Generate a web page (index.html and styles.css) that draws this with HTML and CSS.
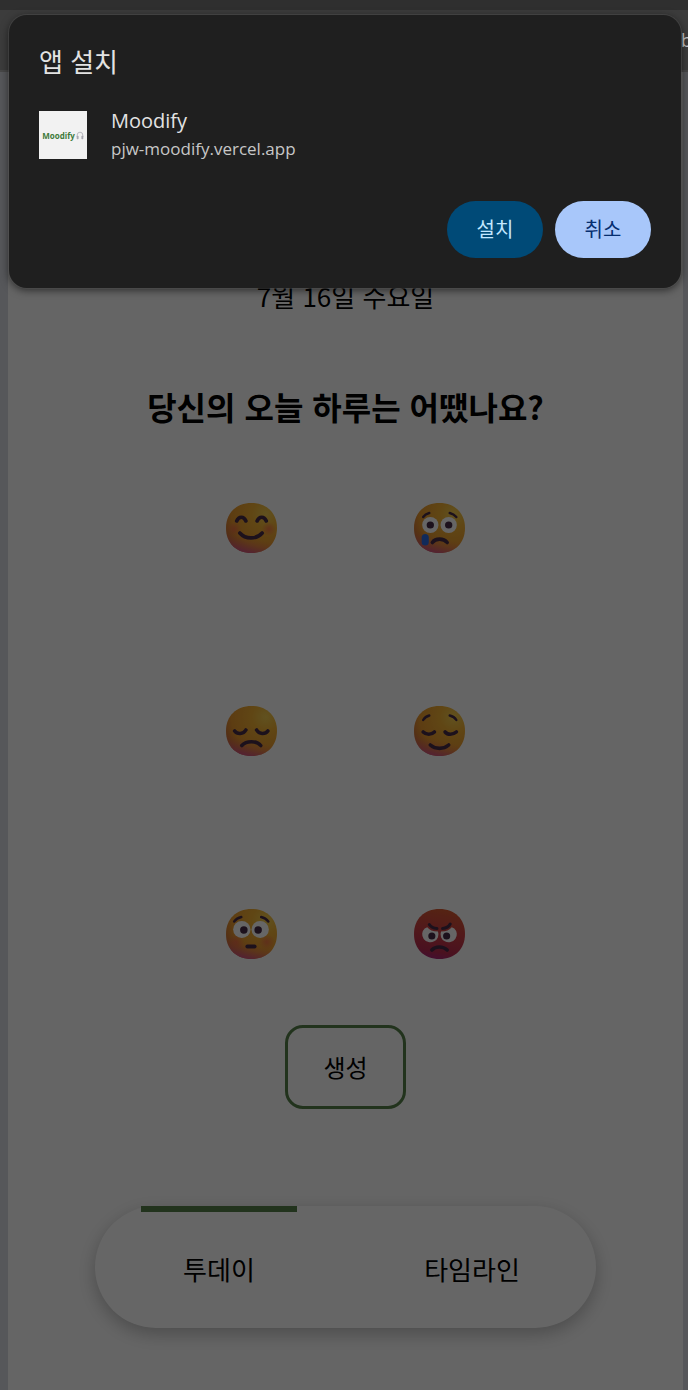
FILE: index.html
```html
<!DOCTYPE html>
<html lang="ko">
<head>
<meta charset="utf-8">
<meta name="viewport" content="width=device-width, initial-scale=1">
<title>Moodify</title>
<link rel="stylesheet" href="styles.css">
</head>
<body>
<svg class="defs" aria-hidden="true">
  <defs>
    <radialGradient id="face" cx="0.78" cy="0.22" r="0.9">
      <stop offset="0" stop-color="#f2cc50"/>
      <stop offset="0.3" stop-color="#f0b034"/>
      <stop offset="0.75" stop-color="#e8982e"/>
      <stop offset="1" stop-color="#c86a38"/>
    </radialGradient>
    <linearGradient id="chin" x1="0.4" y1="1" x2="0.48" y2="0.68">
      <stop offset="0" stop-color="#d0508c" stop-opacity="0.9"/>
      <stop offset="1" stop-color="#e87848" stop-opacity="0"/>
    </linearGradient>
    <linearGradient id="rage" x1="0.6" y1="0" x2="0.4" y2="1">
      <stop offset="0" stop-color="#d65a30"/>
      <stop offset="0.45" stop-color="#cc4044"/>
      <stop offset="0.85" stop-color="#b82c50"/>
      <stop offset="1" stop-color="#a82878"/>
    </linearGradient>
    <radialGradient id="blush">
      <stop offset="0" stop-color="#f0604c" stop-opacity="0.65"/>
      <stop offset="1" stop-color="#f0604c" stop-opacity="0"/>
    </radialGradient>
    <path id="head" d="M25 0C40 0 50 10 50 25S40 50 25 50 0 40 0 25 10 0 25 0Z"/>
  </defs>
</svg>

<header class="browser-bar"><span class="browser-text">b</span></header>

<div class="viewport">
  <main class="page">
    <p class="date">7월 16일 수요일</p>
    <h1 class="question">당신의 오늘 하루는 어땠나요?</h1>

    <div class="moods">
      <button class="mood" type="button" aria-label="행복">
        <svg viewBox="0 0 50 50" preserveAspectRatio="none"><use href="#head" fill="url(#face)"/><use href="#head" fill="url(#chin)"/>
          <circle cx="8" cy="26" r="7" fill="url(#blush)"/><circle cx="42" cy="26" r="7" fill="url(#blush)"/>
          <g class="line"><path d="M10.500 18C12.500 13 17.500 13 19.500 18M30.500 18C32.500 13 37.500 13 39.500 18M13.500 30C19 36.500 30 36.500 35.500 30"/></g></svg>
      </button>
      <button class="mood" type="button" aria-label="눈물">
        <svg viewBox="0 0 50 50" preserveAspectRatio="none"><use href="#head" fill="url(#face)"/><use href="#head" fill="url(#chin)"/>
          <circle class="white" cx="16" cy="22" r="8"/><circle class="white" cx="34" cy="22" r="8"/>
          <circle class="ink" cx="16" cy="22" r="3.600"/><circle class="ink" cx="34" cy="22" r="3.600"/>
          <rect x="7.500" y="31" width="7" height="11.500" rx="3.500" fill="#2b6ae0"/>
          <g class="line"><path d="M18 39.500C21 35 29 35 32.500 39.500"/><path class="thin" d="M9 14Q11 11 15 10M35 10Q39 11 41.500 14"/></g></svg>
      </button>
      <button class="mood" type="button" aria-label="실망">
        <svg viewBox="0 0 50 50" preserveAspectRatio="none"><use href="#head" fill="url(#face)"/><use href="#head" fill="url(#chin)"/>
          <g class="line"><path d="M8.500 25C11 28.500 17 28.500 19.500 24M30 24C32.500 28.500 38.500 28.500 41 25M15.500 39.500C20 34.500 30 34.500 34 39.500"/></g></svg>
      </button>
      <button class="mood" type="button" aria-label="평온">
        <svg viewBox="0 0 50 50" preserveAspectRatio="none"><use href="#head" fill="url(#face)"/><use href="#head" fill="url(#chin)"/>
          <g class="line"><path d="M9 26C12 29 17 29 20 26M30.500 26C33 29 38 29 41.500 26M16 39C21 43.500 29 43.500 34 39"/><path class="thin" d="M9 14Q11 10.500 15 9.500M35 9.500Q39.500 10.500 41.500 14"/></g></svg>
      </button>
      <button class="mood" type="button" aria-label="당황">
        <svg viewBox="0 0 50 50" preserveAspectRatio="none"><use href="#head" fill="url(#face)"/><use href="#head" fill="url(#chin)"/>
          <circle cx="10" cy="33" r="8" fill="url(#blush)"/><circle cx="40" cy="33" r="8" fill="url(#blush)"/>
          <circle class="white" cx="15.500" cy="20.500" r="8.500"/><circle class="white" cx="33.500" cy="20.500" r="8.500"/>
          <circle class="ink" cx="17.500" cy="21" r="3.700"/><circle class="ink" cx="31.500" cy="21" r="3.700"/>
          <rect class="ink" x="19" y="35.500" width="11" height="4" rx="2"/>
          <g class="line"><path class="thin" d="M8 12.500Q10.500 9 15 8M34.500 8Q39 9 41.500 12.500"/></g></svg>
      </button>
      <button class="mood" type="button" aria-label="분노">
        <svg viewBox="0 0 50 50" preserveAspectRatio="none"><use href="#head" fill="url(#rage)"/>
          <path class="white" d="M10.500 19.500A8 8 0 1 0 23.500 22.500Q16 22.500 13 18.300ZM39.500 19.500A8 8 0 1 1 26.500 22.500Q34 22.500 37 18.300Z"/>
          <circle class="ink" cx="17.500" cy="27" r="3.500"/><circle class="ink" cx="32" cy="27" r="3.500"/>
          <g class="line"><path d="M17.500 41C21 37 28.500 37 32.500 41"/><path class="brow" d="M15 15.500Q17 19 22.500 19.500M35.500 15Q33.500 19 28 19.500"/></g></svg>
      </button>
    </div>

    <button class="create" type="button">생성</button>

    <nav class="tabs">
      <a class="tab active" href="#today">투데이</a>
      <a class="tab" href="#timeline">타임라인</a>
    </nav>
  </main>
  <div class="scrim"></div>
</div>

<dialog class="install" open aria-labelledby="install-title">
  <h2 class="install-title" id="install-title">앱 설치</h2>
  <div class="app">
    <div class="app-icon">
      <span>Moodify</span>
      <svg class="headphones" viewBox="0 0 8 9" aria-hidden="true"><path d="M1.200 6V4a2.800 2.800 0 0 1 5.600 0V6" fill="none" stroke="#b4b4bc" stroke-width="0.900"/><rect x="0.700" y="4.800" width="1.900" height="3.400" rx="0.800" fill="#aaaab2"/><rect x="5.400" y="4.800" width="1.900" height="3.400" rx="0.800" fill="#aaaab2"/></svg>
    </div>
    <div class="app-text">
      <p class="app-name">Moodify</p>
      <p class="app-url">pjw-moodify.vercel.app</p>
    </div>
  </div>
  <div class="actions">
    <button class="action confirm" type="button">설치</button>
    <button class="action cancel" type="button">취소</button>
  </div>
</dialog>
</body>
</html>
```
FILE: styles.css
```css
* {
  box-sizing: border-box;
}

body {
  margin: 0;
  min-height: 100vh;
  display: flex;
  flex-direction: column;
  position: relative;
  background: #3c3c3c;
  color: #000;
  font-family: "Noto Sans CJK KR", sans-serif;
}

h1, h2, p {
  margin: 0;
}

button {
  font-family: inherit;
  cursor: pointer;
}

.defs {
  position: absolute;
  width: 0;
  height: 0;
}

.browser-bar {
  height: 72px;
  border-top: 10px solid #2f2f2f;
  border-bottom: 2px solid #474747;
  display: flex;
  align-items: center;
  justify-content: flex-end;
  overflow: hidden;
}

.browser-text {
  width: 7px;
  color: #c8c8c8;
  font: 18px/24px "Open Sans", sans-serif;
}

.viewport {
  flex: 1;
  position: relative;
  display: flex;
  padding: 0 5px 0 8px;
  background: #d8dae2;
}

.page {
  flex: 1;
  display: flex;
  flex-direction: column;
  align-items: center;
  padding: 206px 24px 62px;
  background: #fdfdfd;
}

.scrim {
  position: absolute;
  inset: 0;
  background: rgba(0, 0, 0, 0.6);
  pointer-events: none;
}

.date {
  font-size: 26px;
  line-height: 36px;
}

.question {
  margin-top: 68px;
  font-size: 32px;
  line-height: 48px;
  font-weight: 700;
}

.moods {
  display: grid;
  grid-template-columns: repeat(2, 51px);
  gap: 153px 137px;
  margin-top: 73px;
}

.mood {
  height: 50px;
  padding: 0;
  border: 0;
  background: none;
}

.mood svg {
  display: block;
  width: 100%;
  height: 100%;
}

.line {
  fill: none;
  stroke: #482c48;
  stroke-width: 3.6;
  stroke-linecap: round;
}

.thin {
  stroke-width: 2.4;
}

.brow {
  stroke-width: 3;
}

.ink {
  fill: #482c48;
}

.white {
  fill: #fff;
}

.create {
  margin-top: 66px;
  padding: 20px 35px;
  border: 3px solid #558049;
  border-radius: 18px;
  background: none;
  color: #000;
  font-size: 24px;
  line-height: 38px;
}

.tabs {
  display: flex;
  width: 100%;
  max-width: 501px;
  margin-top: 97px;
  padding: 0 46px;
  justify-content: space-between;
  border-radius: 61px;
  background: #fff;
  box-shadow: 0 6px 18px rgba(0, 0, 0, 0.25);
}

.tab {
  width: 156px;
  padding: 37px 0 39px;
  border-top: 6px solid transparent;
  color: #000;
  font-size: 26px;
  line-height: 40px;
  text-align: center;
  text-decoration: none;
}

.tab.active {
  border-top-color: #558049;
}

.install {
  position: absolute;
  top: 15px;
  left: 9px;
  right: 7px;
  width: auto;
  margin: 0;
  padding: 27px 30px 30px;
  border: 0;
  border-radius: 18px;
  background: #1f1f1f;
  color: #e3e3e3;
  box-shadow: 0 0 0 1px rgba(90, 90, 90, 0.4), 0 2px 8px rgba(0, 0, 0, 0.6);
}

.install-title {
  font-size: 26px;
  line-height: 38px;
  font-weight: 400;
}

.app {
  display: flex;
  gap: 24px;
  margin-top: 27px;
  font-family: "Open Sans", sans-serif;
}

.app-icon {
  display: flex;
  align-items: center;
  justify-content: center;
  gap: 1px;
  width: 48px;
  height: 48px;
  margin-top: 4px;
  background: #f2f2f2;
  color: #3f7a3a;
  font-size: 8px;
  font-weight: 700;
}

.headphones {
  width: 8px;
  height: 9px;
}

.app-name {
  font-size: 20px;
  line-height: 28px;
}

.app-url {
  color: #c7c7c7;
  font-size: 17px;
  line-height: 28px;
}

.actions {
  display: flex;
  justify-content: flex-end;
  gap: 12px;
  margin-top: 38px;
}

.action {
  width: 96px;
  height: 57px;
  padding: 0 0 2px;
  border: 0;
  border-radius: 29px;
  font-size: 20px;
}

.confirm {
  background: #004a77;
  color: #c2e7ff;
}

.cancel {
  background: #a8c7fa;
  color: #062e6f;
}
```
